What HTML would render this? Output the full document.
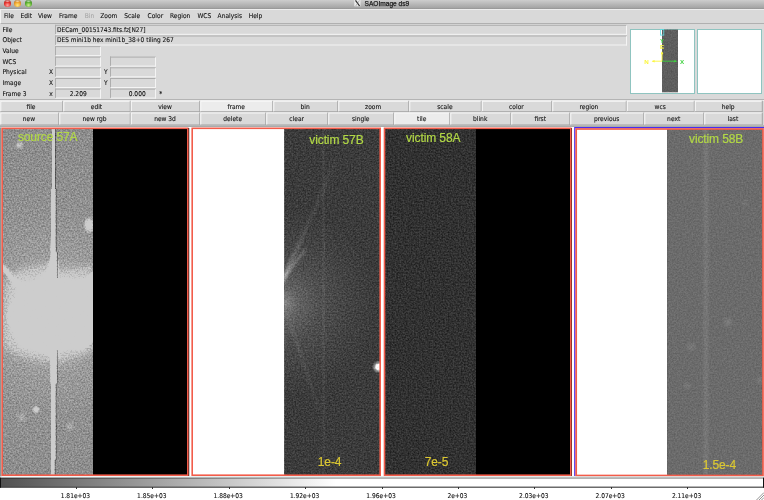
<!DOCTYPE html>
<html><head><meta charset="utf-8"><title>SAOImage ds9</title>
<style>
html,body{margin:0;padding:0;}
body{width:764px;height:500px;position:relative;overflow:hidden;background:#d9d9d9;font-family:"DejaVu Sans Condensed","DejaVu Sans","Liberation Sans",sans-serif;font-size:6.6px;color:#111;-webkit-text-stroke:0.1px currentColor;}
.a{position:absolute;}
.t{position:absolute;white-space:nowrap;line-height:8px;height:8px;will-change:transform;}
.ent{position:absolute;height:10px;box-sizing:border-box;border:1px solid;border-color:#adadad #f4f4f4 #f4f4f4 #adadad;background:#d9d9d9;}
.btn{position:absolute;height:12px;box-sizing:border-box;border:1px solid;border-color:#f6f6f6 #a4a4a4 #a4a4a4 #f6f6f6;background:#d9d9d9;text-align:center;line-height:10px;white-space:nowrap;}
.btn span{display:block;will-change:transform;}
.btn.on{background:#ececec;}
.fl{-webkit-text-stroke:0.2px currentColor;position:absolute;white-space:nowrap;font-family:"Liberation Sans",sans-serif;font-size:12px;letter-spacing:-0.11px;line-height:14px;height:14px;will-change:transform;}
.g{color:#b2d846;}
.y{color:#dcc832;}
</style></head><body>

<div class="a" style="left:0;top:0;width:764px;height:8.5px;background:linear-gradient(#cdcdcd,#a4a4a4 88%,#909090);"></div>
<div class="a" style="left:4.0px;top:-0.3px;width:6.8px;height:6.8px;border-radius:50%;background:radial-gradient(ellipse 40% 18% at 50% 16%,rgba(255,255,255,.75),rgba(255,255,255,0) 100%),radial-gradient(circle at 50% 74%,#ffa8a4 0,#e6322c 48%,#8a1c16 100%);"></div>
<div class="a" style="left:14.3px;top:-0.3px;width:6.8px;height:6.8px;border-radius:50%;background:radial-gradient(ellipse 40% 18% at 50% 16%,rgba(255,255,255,.75),rgba(255,255,255,0) 100%),radial-gradient(circle at 50% 74%,#ffe97c 0,#f0a22e 48%,#9c5a12 100%);"></div>
<div class="a" style="left:24.9px;top:-0.3px;width:6.8px;height:6.8px;border-radius:50%;background:radial-gradient(ellipse 40% 18% at 50% 16%,rgba(255,255,255,.75),rgba(255,255,255,0) 100%),radial-gradient(circle at 50% 74%,#d2f08c 0,#5ab032 48%,#2c6c1a 100%);"></div>
<svg class="a" style="left:354px;top:0" width="7" height="7" viewBox="354 0 7 7"><rect x="354.3" y="0" width="6.2" height="6.3" fill="#ececec"/><path d="M355.5 0.4 L359.6 6" stroke="#2e2e2e" stroke-width="1.25" fill="none"/><path d="M359.4 0.5 L355.7 6" stroke="#666" stroke-width="0.45" fill="none"/></svg>
<div class="t" style="left:364px;top:0px;transform:translate(0.5px,0px);-webkit-text-stroke:0.25px #1c1c1c;font-family:'Liberation Sans',sans-serif;font-size:6.6px;color:#222;">SAOImage ds9</div>
<div class="a" style="left:0;top:8.5px;width:764px;height:15px;background:#d9d9d9;box-sizing:border-box;border-top:1px solid #ededed;border-left:1px solid #f2f2f2;border-bottom:1px solid #b0b0b0;"></div>
<div class="t" style="left:4px;top:12px;transform:translate(0px,0.3px);">File</div>
<div class="t" style="left:20px;top:12px;transform:translate(0.5px,0.3px);">Edit</div>
<div class="t" style="left:37px;top:12px;transform:translate(0.9px,0.3px);">View</div>
<div class="t" style="left:59px;top:12px;transform:translate(0px,0.3px);">Frame</div>
<div class="t" style="left:84px;top:12px;transform:translate(0.7px,0.3px);color:#a8a8a8">Bin</div>
<div class="t" style="left:100px;top:12px;transform:translate(0.2px,0.3px);">Zoom</div>
<div class="t" style="left:124px;top:12px;transform:translate(0.2px,0.3px);">Scale</div>
<div class="t" style="left:147px;top:12px;transform:translate(0.6px,0.3px);">Color</div>
<div class="t" style="left:170px;top:12px;transform:translate(0px,0.3px);">Region</div>
<div class="t" style="left:197px;top:12px;transform:translate(0.4px,0.3px);">WCS</div>
<div class="t" style="left:217px;top:12px;transform:translate(0.6px,0.3px);">Analysis</div>
<div class="t" style="left:248px;top:12px;transform:translate(0.7px,0.3px);">Help</div>
<div class="t" style="left:2px;top:26px;transform:translate(0.5px,0px);">File</div>
<div class="t" style="left:2px;top:36px;transform:translate(0.5px,0.4px);">Object</div>
<div class="t" style="left:2px;top:46px;transform:translate(0.5px,0.9px);">Value</div>
<div class="t" style="left:2px;top:57px;transform:translate(0.5px,0.6px);">WCS</div>
<div class="t" style="left:2px;top:68px;transform:translate(0.5px,0.4px);">Physical</div>
<div class="t" style="left:2px;top:78px;transform:translate(0.5px,0.9px);">Image</div>
<div class="t" style="left:2px;top:89px;transform:translate(0.5px,0.5px);">Frame 3</div>
<div class="ent" style="left:55px;top:24px;transform:translate(0px,0.8px);width:572px"></div>
<div class="ent" style="left:55px;top:35px;transform:translate(0px,0.5px);width:572px"></div>
<div class="t" style="left:57px;top:26px;font-size:6.5px">DECam_00151743.fits.fz[N27]</div>
<div class="t" style="left:57px;top:36px;transform:translate(0px,0.4px);font-size:6.5px">DES mini1b hex mini1b_38+0 tiling 267</div>
<div class="ent" style="left:55px;top:46px;transform:translate(0px,0.1px);width:46px"></div>
<div class="ent" style="left:55px;top:56px;transform:translate(0px,0.6px);width:46px"></div>
<div class="ent" style="left:110px;top:56px;transform:translate(0px,0.6px);width:46px"></div>
<div class="ent" style="left:55px;top:67px;transform:translate(0px,0.3px);width:46px"></div>
<div class="ent" style="left:110px;top:67px;transform:translate(0px,0.3px);width:46px"></div>
<div class="ent" style="left:55px;top:78px;width:46px"></div>
<div class="ent" style="left:110px;top:78px;width:46px"></div>
<div class="ent" style="left:55px;top:88px;transform:translate(0px,0.6px);width:46px"></div>
<div class="ent" style="left:110px;top:88px;transform:translate(0px,0.6px);width:46px"></div>
<div class="t" style="left:49px;top:68px;transform:translate(0px,0.4px);">X</div>
<div class="t" style="left:104px;top:68px;transform:translate(0px,0.4px);">Y</div>
<div class="t" style="left:49px;top:78px;transform:translate(0px,0.9px);">X</div>
<div class="t" style="left:104px;top:78px;transform:translate(0px,0.9px);">Y</div>
<div class="t" style="left:49px;top:89px;transform:translate(0.3px,0.5px);">x</div>
<div class="t" style="left:69px;top:89px;transform:translate(0.7px,0.5px);">2.209</div>
<div class="t" style="left:128px;top:89px;transform:translate(0.7px,0.5px);">0.000</div>
<div class="t" style="left:159px;top:89px;transform:translate(0.3px,0.5px);">*</div>
<div class="a" style="left:630px;top:28.5px;width:65px;height:65px;box-sizing:border-box;border:1px solid #8fc4c0;background:#fff;"></div>
<div class="a" style="left:697.3px;top:28.5px;width:65px;height:65px;box-sizing:border-box;border:1px solid #8fc4c0;background:#fff;"></div>
<svg class="a" style="left:630px;top:28px" width="66" height="66" viewBox="630 28 66 66">
<defs><filter id="np" filterUnits="userSpaceOnUse" x="662" y="29.7" width="16" height="62.5" color-interpolation-filters="sRGB"><feTurbulence type="fractalNoise" baseFrequency="0.7" numOctaves="2" seed="4" result="t"/><feColorMatrix in="t" type="matrix" values="1 0 0 0 0  1 0 0 0 0  1 0 0 0 0  0 0 0 0 1" result="n"/><feComposite in="SourceGraphic" in2="n" operator="arithmetic" k1="0" k2="1" k3="0.14" k4="-0.07"/></filter></defs>
<rect x="662" y="29.7" width="16" height="62.5" fill="#5e5e5e" filter="url(#np)"/>
<rect x="660.6" y="29.5" width="3.2" height="5.6" fill="none" stroke="#5fe0e6" stroke-width="0.8"/>
<path d="M662 61.2 H652.5 M662 61.2 V52" stroke="#fbf63c" stroke-width="0.9" fill="none"/>
<path d="M651.6 61.2 l3 -1.3 v2.6z M662 51.3 l-1.3 3 h2.6z" fill="#fbf63c"/>
<path d="M662 61.2 H676" stroke="#3fd23f" stroke-width="0.9"/>
<path d="M677.2 61.2 l-3 -1.3 v2.6z" fill="#3fd23f"/>
<g font-family="Liberation Sans,sans-serif" font-size="6.2" font-weight="bold">
<text x="644.3" y="63.6" fill="#fbf63c">N</text>
<text x="679.9" y="63.6" fill="#3fd23f">X</text>
<text x="659.9" y="43.3" fill="#3fd23f">Y</text>
<text x="660.1" y="49" fill="#fbf63c">E</text>
</g></svg>
<div class="a" style="left:0;top:99px;width:764px;height:1px;background:#b4b4b4;"></div>
<div class="a" style="left:0;top:100px;width:764px;height:1px;background:#f0f0f0;"></div>
<svg class="a" style="left:0;top:99px" width="764" height="28" viewBox="0 99 764 28">
<rect x="0.3" y="100.7" width="63.0" height="11.5" fill="#d9d9d9"/>
<path d="M0.3 100.7 h63.0 v1 h-62.0 v10.5 h-1z" fill="#f8f8f8"/>
<path d="M63.3 100.7 h-1 v10.5 h-62.0 v1 h63.0z" fill="#a2a2a2"/>
<rect x="63.3" y="100.7" width="67.5" height="11.5" fill="#d9d9d9"/>
<path d="M63.3 100.7 h67.5 v1 h-66.5 v10.5 h-1z" fill="#f8f8f8"/>
<path d="M130.8 100.7 h-1 v10.5 h-66.5 v1 h67.5z" fill="#a2a2a2"/>
<rect x="130.8" y="100.7" width="69.5" height="11.5" fill="#d9d9d9"/>
<path d="M130.8 100.7 h69.5 v1 h-68.5 v10.5 h-1z" fill="#f8f8f8"/>
<path d="M200.3 100.7 h-1 v10.5 h-68.5 v1 h69.5z" fill="#a2a2a2"/>
<rect x="200.3" y="100.7" width="73.0" height="11.5" fill="#ececec"/>
<path d="M200.3 100.7 h73.0 v1 h-72.0 v10.5 h-1z" fill="#f8f8f8"/>
<path d="M273.3 100.7 h-1 v10.5 h-72.0 v1 h73.0z" fill="#a2a2a2"/>
<rect x="273.3" y="100.7" width="65.0" height="11.5" fill="#d9d9d9"/>
<path d="M273.3 100.7 h65.0 v1 h-64.0 v10.5 h-1z" fill="#f8f8f8"/>
<path d="M338.3 100.7 h-1 v10.5 h-64.0 v1 h65.0z" fill="#a2a2a2"/>
<rect x="338.3" y="100.7" width="71.0" height="11.5" fill="#d9d9d9"/>
<path d="M338.3 100.7 h71.0 v1 h-70.0 v10.5 h-1z" fill="#f8f8f8"/>
<path d="M409.3 100.7 h-1 v10.5 h-70.0 v1 h71.0z" fill="#a2a2a2"/>
<rect x="409.3" y="100.7" width="72.5" height="11.5" fill="#d9d9d9"/>
<path d="M409.3 100.7 h72.5 v1 h-71.5 v10.5 h-1z" fill="#f8f8f8"/>
<path d="M481.8 100.7 h-1 v10.5 h-71.5 v1 h72.5z" fill="#a2a2a2"/>
<rect x="481.8" y="100.7" width="70.5" height="11.5" fill="#d9d9d9"/>
<path d="M481.8 100.7 h70.5 v1 h-69.5 v10.5 h-1z" fill="#f8f8f8"/>
<path d="M552.3 100.7 h-1 v10.5 h-69.5 v1 h70.5z" fill="#a2a2a2"/>
<rect x="552.3" y="100.7" width="74.5" height="11.5" fill="#d9d9d9"/>
<path d="M552.3 100.7 h74.5 v1 h-73.5 v10.5 h-1z" fill="#f8f8f8"/>
<path d="M626.8 100.7 h-1 v10.5 h-73.5 v1 h74.5z" fill="#a2a2a2"/>
<rect x="626.8" y="100.7" width="68.0" height="11.5" fill="#d9d9d9"/>
<path d="M626.8 100.7 h68.0 v1 h-67.0 v10.5 h-1z" fill="#f8f8f8"/>
<path d="M694.8 100.7 h-1 v10.5 h-67.0 v1 h68.0z" fill="#a2a2a2"/>
<rect x="694.8" y="100.7" width="68.0" height="11.5" fill="#d9d9d9"/>
<path d="M694.8 100.7 h68.0 v1 h-67.0 v10.5 h-1z" fill="#f8f8f8"/>
<path d="M762.8 100.7 h-1 v10.5 h-67.0 v1 h68.0z" fill="#a2a2a2"/>
<rect x="0.3" y="112.5" width="59.0" height="13.0" fill="#d9d9d9"/>
<path d="M0.3 112.5 h59.0 v1 h-58.0 v12.0 h-1z" fill="#f8f8f8"/>
<path d="M59.3 112.5 h-1 v12.0 h-58.0 v1 h59.0z" fill="#a2a2a2"/>
<rect x="59.3" y="112.5" width="71.5" height="13.0" fill="#d9d9d9"/>
<path d="M59.3 112.5 h71.5 v1 h-70.5 v12.0 h-1z" fill="#f8f8f8"/>
<path d="M130.8 112.5 h-1 v12.0 h-70.5 v1 h71.5z" fill="#a2a2a2"/>
<rect x="130.8" y="112.5" width="69.5" height="13.0" fill="#d9d9d9"/>
<path d="M130.8 112.5 h69.5 v1 h-68.5 v12.0 h-1z" fill="#f8f8f8"/>
<path d="M200.3 112.5 h-1 v12.0 h-68.5 v1 h69.5z" fill="#a2a2a2"/>
<rect x="200.3" y="112.5" width="66.0" height="13.0" fill="#d9d9d9"/>
<path d="M200.3 112.5 h66.0 v1 h-65.0 v12.0 h-1z" fill="#f8f8f8"/>
<path d="M266.3 112.5 h-1 v12.0 h-65.0 v1 h66.0z" fill="#a2a2a2"/>
<rect x="266.3" y="112.5" width="62.0" height="13.0" fill="#d9d9d9"/>
<path d="M266.3 112.5 h62.0 v1 h-61.0 v12.0 h-1z" fill="#f8f8f8"/>
<path d="M328.3 112.5 h-1 v12.0 h-61.0 v1 h62.0z" fill="#a2a2a2"/>
<rect x="328.3" y="112.5" width="66.0" height="13.0" fill="#d9d9d9"/>
<path d="M328.3 112.5 h66.0 v1 h-65.0 v12.0 h-1z" fill="#f8f8f8"/>
<path d="M394.3 112.5 h-1 v12.0 h-65.0 v1 h66.0z" fill="#a2a2a2"/>
<rect x="394.3" y="112.5" width="56.0" height="13.0" fill="#ececec"/>
<path d="M394.3 112.5 h56.0 v1 h-55.0 v12.0 h-1z" fill="#f8f8f8"/>
<path d="M450.3 112.5 h-1 v12.0 h-55.0 v1 h56.0z" fill="#a2a2a2"/>
<rect x="450.3" y="112.5" width="61.0" height="13.0" fill="#d9d9d9"/>
<path d="M450.3 112.5 h61.0 v1 h-60.0 v12.0 h-1z" fill="#f8f8f8"/>
<path d="M511.3 112.5 h-1 v12.0 h-60.0 v1 h61.0z" fill="#a2a2a2"/>
<rect x="511.3" y="112.5" width="59.0" height="13.0" fill="#d9d9d9"/>
<path d="M511.3 112.5 h59.0 v1 h-58.0 v12.0 h-1z" fill="#f8f8f8"/>
<path d="M570.3 112.5 h-1 v12.0 h-58.0 v1 h59.0z" fill="#a2a2a2"/>
<rect x="570.3" y="112.5" width="74.0" height="13.0" fill="#d9d9d9"/>
<path d="M570.3 112.5 h74.0 v1 h-73.0 v12.0 h-1z" fill="#f8f8f8"/>
<path d="M644.3 112.5 h-1 v12.0 h-73.0 v1 h74.0z" fill="#a2a2a2"/>
<rect x="644.3" y="112.5" width="60.0" height="13.0" fill="#d9d9d9"/>
<path d="M644.3 112.5 h60.0 v1 h-59.0 v12.0 h-1z" fill="#f8f8f8"/>
<path d="M704.3 112.5 h-1 v12.0 h-59.0 v1 h60.0z" fill="#a2a2a2"/>
<rect x="704.3" y="112.5" width="58.5" height="13.0" fill="#d9d9d9"/>
<path d="M704.3 112.5 h58.5 v1 h-57.5 v12.0 h-1z" fill="#f8f8f8"/>
<path d="M762.8 112.5 h-1 v12.0 h-57.5 v1 h58.5z" fill="#a2a2a2"/>
</svg>
<div class="t" style="left:-8.8px;top:102.6px;width:80px;text-align:center">file</div>
<div class="t" style="left:56px;top:102px;transform:translate(0.5px,0.6px);width:80px;text-align:center">edit</div>
<div class="t" style="left:125px;top:102px;transform:translate(0px,0.6px);width:80px;text-align:center">view</div>
<div class="t" style="left:196px;top:102px;transform:translate(0.2px,0.6px);width:80px;text-align:center">frame</div>
<div class="t" style="left:265px;top:102px;transform:translate(0.2px,0.6px);width:80px;text-align:center">bin</div>
<div class="t" style="left:333px;top:102px;transform:translate(0.2px,0.6px);width:80px;text-align:center">zoom</div>
<div class="t" style="left:404px;top:102px;transform:translate(0.9px,0.6px);width:80px;text-align:center">scale</div>
<div class="t" style="left:476px;top:102px;transform:translate(0.4px,0.6px);width:80px;text-align:center">color</div>
<div class="t" style="left:548px;top:102px;transform:translate(0.9px,0.6px);width:80px;text-align:center">region</div>
<div class="t" style="left:620px;top:102px;transform:translate(0.2px,0.6px);width:80px;text-align:center">wcs</div>
<div class="t" style="left:688px;top:102px;transform:translate(0.2px,0.6px);width:80px;text-align:center">help</div>
<div class="t" style="left:-10.8px;top:115.4px;width:80px;text-align:center">new</div>
<div class="t" style="left:54px;top:115px;transform:translate(0.5px,0.4px);width:80px;text-align:center">new rgb</div>
<div class="t" style="left:125px;top:115px;transform:translate(0px,0.4px);width:80px;text-align:center">new 3d</div>
<div class="t" style="left:192px;top:115px;transform:translate(0.7px,0.4px);width:80px;text-align:center">delete</div>
<div class="t" style="left:256px;top:115px;transform:translate(0.7px,0.4px);width:80px;text-align:center">clear</div>
<div class="t" style="left:320px;top:115px;transform:translate(0.7px,0.4px);width:80px;text-align:center">single</div>
<div class="t" style="left:381px;top:115px;transform:translate(0.7px,0.4px);width:80px;text-align:center">tile</div>
<div class="t" style="left:440px;top:115px;transform:translate(0.2px,0.4px);width:80px;text-align:center">blink</div>
<div class="t" style="left:500px;top:115px;transform:translate(0.2px,0.4px);width:80px;text-align:center">first</div>
<div class="t" style="left:566px;top:115px;transform:translate(0.7px,0.4px);width:80px;text-align:center">previous</div>
<div class="t" style="left:633px;top:115px;transform:translate(0.7px,0.4px);width:80px;text-align:center">next</div>
<div class="t" style="left:692px;top:115px;transform:translate(0.9px,0.4px);width:80px;text-align:center">last</div>
<div class="a" style="left:0;top:125px;width:764px;height:2.4px;background:linear-gradient(#bcbcbc,#a2a6a6);"></div>
<div class="a" style="left:0;top:127.4px;width:764px;height:49.6px;height:349.4px;background:#fff;"></div>
<svg class="a" style="left:0;top:127px" width="764" height="350" viewBox="0 127 764 350">
<defs>
<filter id="n1" filterUnits="userSpaceOnUse" x="3" y="129" width="90" height="346" color-interpolation-filters="sRGB">
<feTurbulence type="fractalNoise" baseFrequency="0.62" numOctaves="2" seed="7" result="t"/>
<feColorMatrix in="t" type="matrix" values="1 0 0 0 0  1 0 0 0 0  1 0 0 0 0  0 0 0 0 1" result="n"/>
<feComposite in="SourceGraphic" in2="n" operator="arithmetic" k1="0" k2="1" k3="0.4" k4="-0.2" result="s"/>
<feComponentTransfer in="s"><feFuncR type="table" tableValues="0 .1 .2 .3 .4 .5 .6 .7 .8 .804 .804"/><feFuncG type="table" tableValues="0 .1 .2 .3 .4 .5 .6 .7 .8 .804 .804"/><feFuncB type="table" tableValues="0 .1 .2 .3 .4 .5 .6 .7 .8 .804 .804"/></feComponentTransfer>
</filter>
<filter id="n2" filterUnits="userSpaceOnUse" x="284" y="129" width="96" height="346" color-interpolation-filters="sRGB">
<feTurbulence type="fractalNoise" baseFrequency="0.62" numOctaves="2" seed="11" result="t"/>
<feColorMatrix in="t" type="matrix" values="1 0 0 0 0  1 0 0 0 0  1 0 0 0 0  0 0 0 0 1" result="n"/>
<feComposite in="SourceGraphic" in2="n" operator="arithmetic" k1="0" k2="1" k3="0.27" k4="-0.135"/>
</filter>
<filter id="n3" filterUnits="userSpaceOnUse" x="385" y="129" width="91" height="346" color-interpolation-filters="sRGB">
<feTurbulence type="fractalNoise" baseFrequency="0.62" numOctaves="2" seed="23" result="t"/>
<feColorMatrix in="t" type="matrix" values="1 0 0 0 0  1 0 0 0 0  1 0 0 0 0  0 0 0 0 1" result="n"/>
<feComposite in="SourceGraphic" in2="n" operator="arithmetic" k1="0" k2="1" k3="0.27" k4="-0.135"/>
</filter>
<filter id="n4" filterUnits="userSpaceOnUse" x="667" y="129" width="96" height="346" color-interpolation-filters="sRGB">
<feTurbulence type="fractalNoise" baseFrequency="0.62" numOctaves="2" seed="5" result="t"/>
<feColorMatrix in="t" type="matrix" values="1 0 0 0 0  1 0 0 0 0  1 0 0 0 0  0 0 0 0 1" result="n"/>
<feComposite in="SourceGraphic" in2="n" operator="arithmetic" k1="0" k2="1" k3="0.16" k4="-0.08"/>
</filter>
<radialGradient id="glow1" cx="50" cy="314" r="160" gradientUnits="userSpaceOnUse">
<stop offset="0" stop-color="#fff" stop-opacity="0.4"/><stop offset="0.25" stop-color="#fff" stop-opacity="0.27"/><stop offset="0.375" stop-color="#fff" stop-opacity="0.13"/><stop offset="0.65" stop-color="#fff" stop-opacity="0.035"/><stop offset="1" stop-color="#fff" stop-opacity="0"/>
</radialGradient>
<filter id="b2" x="-20%" y="-20%" width="140%" height="140%"><feGaussianBlur stdDeviation="1.2"/></filter>
<filter id="b4" x="-30%" y="-30%" width="160%" height="160%"><feGaussianBlur stdDeviation="4"/></filter>
<filter id="b1" x="-30%" y="-30%" width="160%" height="160%"><feGaussianBlur stdDeviation="0.9"/></filter>
<radialGradient id="blob"><stop offset="0" stop-color="#fff" stop-opacity="1"/><stop offset="0.5" stop-color="#fff" stop-opacity="0.6"/><stop offset="1" stop-color="#fff" stop-opacity="0"/></radialGradient>
<radialGradient id="glow2" cx="283" cy="303" r="95" gradientUnits="userSpaceOnUse">
<stop offset="0" stop-color="#fff" stop-opacity="0.55"/><stop offset="0.05" stop-color="#fff" stop-opacity="0.34"/><stop offset="0.16" stop-color="#fff" stop-opacity="0.21"/><stop offset="0.4" stop-color="#fff" stop-opacity="0.11"/><stop offset="0.7" stop-color="#fff" stop-opacity="0.05"/><stop offset="1" stop-color="#fff" stop-opacity="0.01"/>
</radialGradient>
<linearGradient id="sp2" x1="283" y1="277" x2="336" y2="160" gradientUnits="userSpaceOnUse"><stop offset="0" stop-color="#fff" stop-opacity="0.3"/><stop offset="0.2" stop-color="#fff" stop-opacity="0.14"/><stop offset="0.45" stop-color="#fff" stop-opacity="0.06"/><stop offset="1" stop-color="#fff" stop-opacity="0.035"/></linearGradient>
</defs>
<rect x="0" y="127.4" width="1.5" height="350" fill="#8c9696"/><rect x="93" y="128" width="96.2" height="348" fill="#000"/>
<g filter="url(#n1)">
<rect x="3" y="129" width="90" height="346" fill="#8d8d8d"/>
<rect x="3" y="129" width="90" height="346" fill="url(#glow1)"/>
<path filter="url(#b4)" d="M14 272 L47 266 L58 272 L95 266 L95 345 L88 353 L70 357 L57 362 L45 360 L28 357 L12 352 L4 345 L6 285 Z" fill="#fff" opacity="0.42"/>
<path filter="url(#b2)" d="M1 263.5 L7 268.5 L15 278.5 L22 282 L30 282.5 L40 278.5 L47 270 L50 260 L58 262 L58 279 L65 278 L75 280 L85 279 L95 272 L95 338 L88 346 L80 350 L70 349 L60 351 L57 356 L50 356 L45 353 L30 349 L22 347 L16 338 L10 326 L7.5 316 L10 305 L16 296 L17 289 L14 284 L1 267.5 Z" fill="#fff"/>
<circle cx="19.5" cy="145" r="5" fill="url(#blob)" opacity="0.55"/>
<circle cx="36" cy="409.7" r="4" fill="url(#blob)" opacity="1"/>
<circle cx="21.6" cy="417" r="5.5" fill="url(#blob)" opacity="0.3"/>
<circle cx="70" cy="426.6" r="5.5" fill="url(#blob)" opacity="0.27"/>
<ellipse cx="89" cy="225" rx="6" ry="9" fill="url(#blob)"/>
<path d="M52 129 H54.9 V189 H55.7 V252 H56.8 V383.4 H55.7 V459.7 H54.7 V475 H51.2 V383.4 H50.5 V350 L50 300 L50.2 268 L50.6 252 L51.2 225 V189 H52 Z" fill="#fff"/>
<path d="M54.9 129 h.9 V189 h-.9z M55.7 189 h.85 V252 h-.85z M56.8 252 h.8 V278 h-.8z M56.8 350 h.75 V383.4 h-.75z M55.7 383.4 h.75 V459.7 h-.75z M54.7 459.7 h.8 V475 h-.8z" fill="#484848"/>
</g>
<rect x="193" y="129" width="92" height="346" fill="#fff"/>
<g filter="url(#n2)">
<rect x="284.3" y="129" width="96" height="346" fill="#393939"/>
<rect x="284.3" y="129" width="96" height="346" fill="url(#glow2)"/>
<rect x="322.3" y="129" width="2.6" height="346" fill="#fff" opacity="0.05"/>
<path filter="url(#b1)" d="M282 277 L304 249 L306 251 L284 281Z" fill="#fff" opacity="0.2"/>
<path filter="url(#b1)" d="M282 276 L335 159 L338.5 160 L284 284Z" fill="url(#sp2)"/>
<path filter="url(#b1)" d="M284 312 L318 410 L321 410 L289 312Z" fill="#fff" opacity="0.05"/>
<circle cx="378.5" cy="367" r="6.5" fill="url(#blob)"/>
<circle cx="378.8" cy="367" r="3.3" fill="#fff"/>
</g>
<rect x="476" y="128" width="96" height="348" fill="#000"/>
<g filter="url(#n3)">
<rect x="385" y="129" width="91" height="346" fill="#313131"/>
</g>
<rect x="577" y="130" width="91" height="345" fill="#fff"/>
<g filter="url(#n4)">
<rect x="667.1" y="129" width="96" height="346" fill="#6b6b6b"/>
<rect filter="url(#b2)" x="703.5" y="120" width="5" height="366" fill="#fff" opacity="0.075"/>
<circle cx="728" cy="322" r="6" fill="url(#blob)" opacity="0.12"/>
<circle cx="691" cy="347" r="6" fill="url(#blob)" opacity="0.1"/>
<circle cx="745" cy="203" r="4" fill="url(#blob)" opacity="0.08"/>
<circle cx="687" cy="386" r="5" fill="url(#blob)" opacity="0.08"/>
<circle cx="760" cy="380" r="5" fill="url(#blob)" opacity="0.1"/>
</g>
<rect x="2.2" y="128.3" width="185.6" height="346.9" fill="none" stroke="#f25c4a" stroke-width="1.6"/>
<rect x="192.2" y="128.3" width="188" height="346.9" fill="none" stroke="#f25c4a" stroke-width="1.6"/>
<rect x="384.5" y="128.3" width="186.3" height="346.9" fill="none" stroke="#f25c4a" stroke-width="1.6"/>
<path d="M574.8 476 V127.55 H764" fill="none" stroke="#4a2cf0" stroke-width="1.3"/>
<rect x="576.2" y="129" width="186.8" height="346.5" fill="none" stroke="#f25c4a" stroke-width="1.7"/>
</svg>
<div class="fl g" style="left:17px;top:130px;transform:translate(0.9px,0px);">source 57A</div>
<div class="fl g" style="left:309px;top:133px;transform:translate(0.3px,0px);">victim 57B</div>
<div class="fl g" style="left:406px;top:131px;transform:translate(0.1px,0.2px);">victim 58A</div>
<div class="fl g" style="left:689px;top:132px;transform:translate(0px,0.3px);">victim 58B</div>
<div class="fl y" style="left:317px;top:454px;transform:translate(0.8px,0.6px);">1e-4</div>
<div class="fl y" style="left:424px;top:454px;transform:translate(0.7px,0.7px);">7e-5</div>
<div class="fl y" style="left:702px;top:458px;transform:translate(0.7px,0.1px);">1.5e-4</div>
<svg class="a" style="left:0;top:475px" width="764" height="25" viewBox="0 475 764 25"><defs><linearGradient id="cb" x1="0" y1="0" x2="336" y2="0" gradientUnits="userSpaceOnUse"><stop offset="0" stop-color="#505050"/><stop offset="1" stop-color="#fff"/></linearGradient><linearGradient id="cbt" x1="0" y1="0" x2="336" y2="0" gradientUnits="userSpaceOnUse"><stop offset="0" stop-color="#dfe6e6"/><stop offset="1" stop-color="#aab2b2"/></linearGradient></defs><rect x="0" y="476.5" width="764" height="24" fill="#fff"/><rect x="0" y="476.7" width="764" height="1.1" fill="url(#cbt)"/><rect x="0" y="477.7" width="764" height="9.5" fill="url(#cb)"/><rect x="0" y="477.7" width="764" height="1.2" fill="#000" fill-opacity="0.33"/><rect x="0" y="486.6" width="764" height="1.2" fill="#484848"/><rect x="0" y="477.7" width="1" height="10" fill="#111"/><rect x="763" y="477.7" width="1" height="10" fill="#111"/></svg>
<div class="a" style="left:75.9px;top:487px;width:1px;height:2px;background:#333;"></div>
<div class="t" style="left:45px;top:492px;transform:translate(0.4px,0px);width:60px;text-align:center;">1.81e+03</div>
<div class="a" style="left:152.3px;top:487px;width:1px;height:2px;background:#333;"></div>
<div class="t" style="left:121px;top:492px;transform:translate(0.8px,0px);width:60px;text-align:center;">1.85e+03</div>
<div class="a" style="left:228.7px;top:487px;width:1px;height:2px;background:#333;"></div>
<div class="t" style="left:198px;top:492px;transform:translate(0.2px,0px);width:60px;text-align:center;">1.88e+03</div>
<div class="a" style="left:305.1px;top:487px;width:1px;height:2px;background:#333;"></div>
<div class="t" style="left:274px;top:492px;transform:translate(0.6px,0px);width:60px;text-align:center;">1.92e+03</div>
<div class="a" style="left:381.5px;top:487px;width:1px;height:2px;background:#333;"></div>
<div class="t" style="left:351px;top:492px;width:60px;text-align:center;">1.96e+03</div>
<div class="a" style="left:457.9px;top:487px;width:1px;height:2px;background:#333;"></div>
<div class="t" style="left:427px;top:492px;transform:translate(0.4px,0px);width:60px;text-align:center;">2e+03</div>
<div class="a" style="left:534.3px;top:487px;width:1px;height:2px;background:#333;"></div>
<div class="t" style="left:503px;top:492px;transform:translate(0.8px,0px);width:60px;text-align:center;">2.03e+03</div>
<div class="a" style="left:610.7px;top:487px;width:1px;height:2px;background:#333;"></div>
<div class="t" style="left:580px;top:492px;transform:translate(0.2px,0px);width:60px;text-align:center;">2.07e+03</div>
<div class="a" style="left:687.1px;top:487px;width:1px;height:2px;background:#333;"></div>
<div class="t" style="left:656px;top:492px;transform:translate(0.6px,0px);width:60px;text-align:center;">2.11e+03</div>
<svg class="a" style="left:756px;top:492px" width="8" height="8" viewBox="0 0 8 8"><path d="M0.5 8 L8 0.5 M3 8 L8 3 M5.5 8 L8 5.5" stroke="#777" stroke-width="0.8"/></svg>
</body></html>
